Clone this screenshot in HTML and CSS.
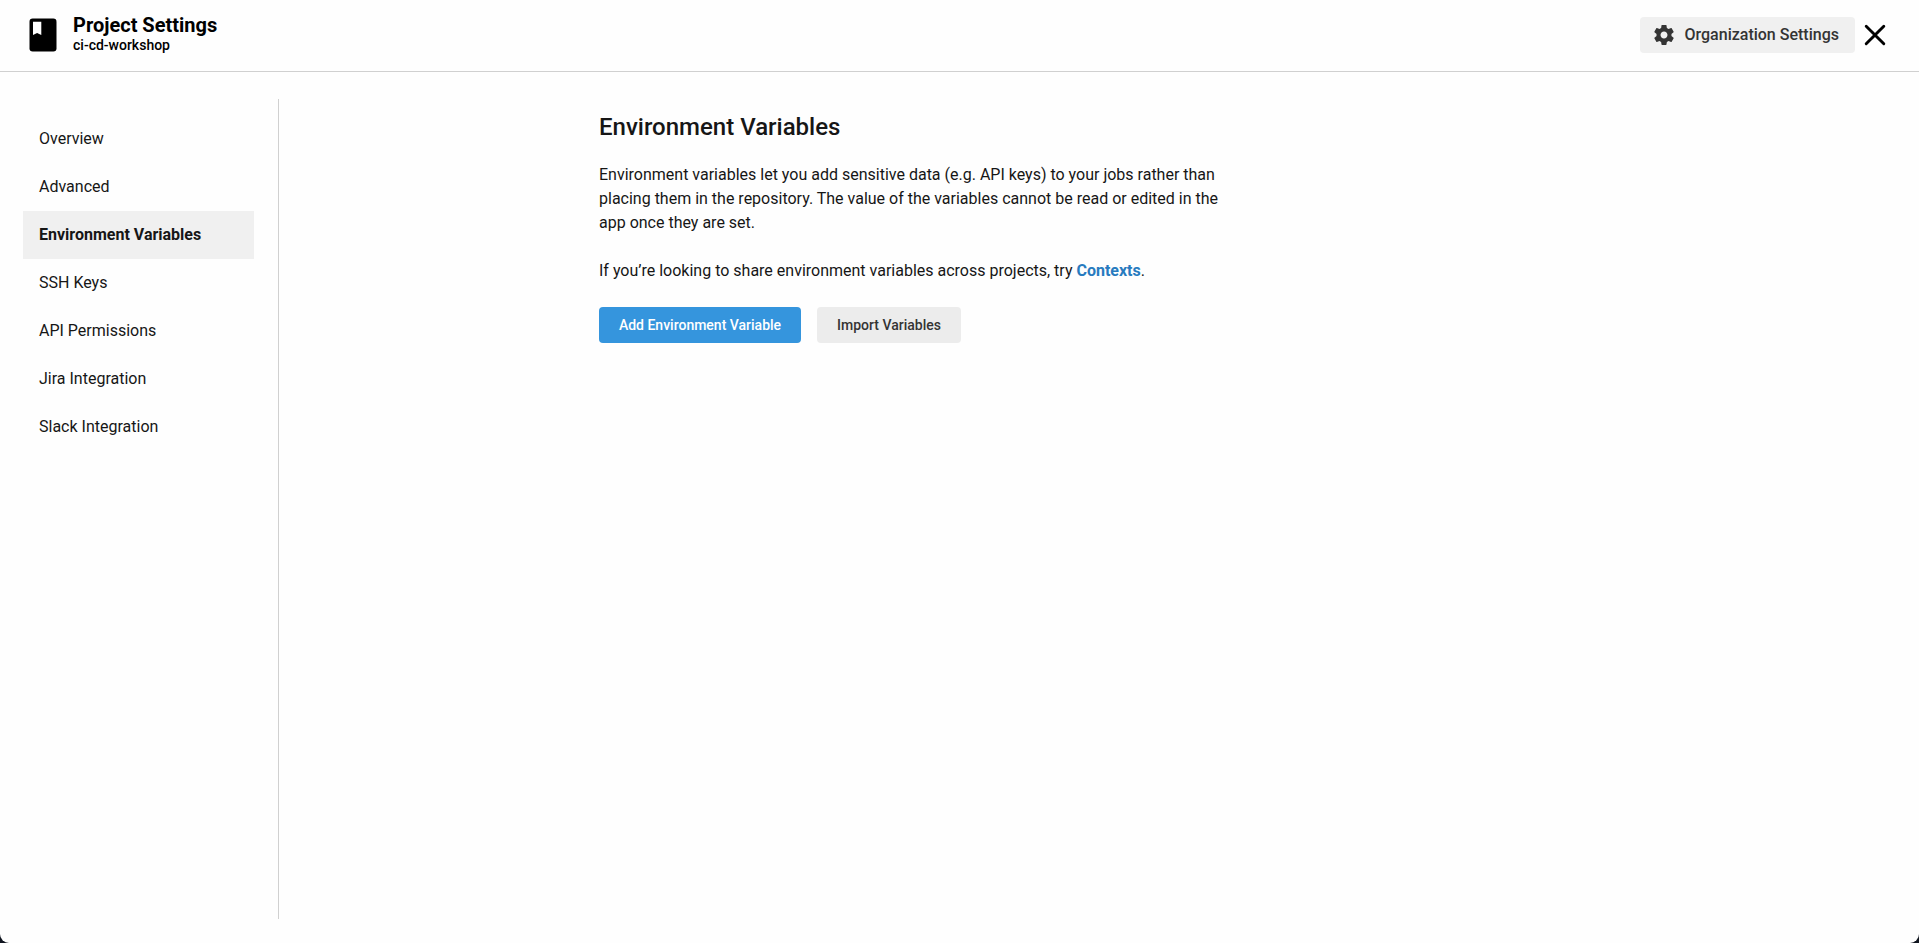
FILE: index.html
```html
<!DOCTYPE html>
<html lang="en">
<head>
<meta charset="utf-8">
<title>Project Settings</title>
<link rel="stylesheet" href="styles.css">
</head>
<body>
<div class="window">
  <header class="header">
    <svg class="project-icon" width="28" height="34" viewBox="0 0 28 34"><rect x=".5" y=".5" width="27" height="33" rx="3.2" fill="#000"/><path d="M4 3.7h8.3v13.4L8.1 15 4 17.1z" fill="#fff"/></svg>
    <div class="titles">
      <h1 class="title">Project Settings</h1>
      <div class="project-name">ci-cd-workshop</div>
    </div>
    <a class="org-button">
      <svg class="gear" width="24" height="24" viewBox="0 0 24 24"><path fill="#343434" d="M19.43 12.98c.04-.32.07-.64.07-.98s-.03-.66-.07-.98l2.11-1.65c.19-.15.24-.42.12-.64l-2-3.46c-.12-.22-.39-.3-.61-.22l-2.49 1c-.52-.4-1.08-.73-1.69-.98l-.38-2.65C14.46 2.18 14.25 2 14 2h-4c-.25 0-.46.18-.49.42l-.38 2.65c-.61.25-1.17.59-1.69.98l-2.49-1c-.23-.09-.49 0-.61.22l-2 3.46c-.13.22-.07.49.12.64l2.11 1.65c-.04.32-.07.65-.07.98s.03.66.07.98l-2.11 1.65c-.19.15-.24.42-.12.64l2 3.46c.12.22.39.3.61.22l2.49-1c.52.4 1.08.73 1.69.98l.38 2.65c.03.24.24.42.49.42h4c.25 0 .46-.18.49-.42l.38-2.65c.61-.25 1.17-.59 1.69-.98l2.49 1c.23.09.49 0 .61-.22l2-3.46c.12-.22.07-.49-.12-.64l-2.11-1.65zM12 15.5c-1.93 0-3.5-1.57-3.5-3.5s1.57-3.5 3.5-3.5 3.5 1.57 3.5 3.5-1.57 3.5-3.5 3.5z"/></svg>
      <span class="org-label">Organization Settings</span>
    </a>
    <svg class="close" width="22" height="22" viewBox="0 0 22 22"><path d="M2.2 2.2l17.6 17.6M19.8 2.2L2.2 19.8" stroke="#000" stroke-width="2.9" stroke-linecap="round"/></svg>
  </header>
  <div class="body">
    <nav class="sidebar">
      <a class="nav-item">Overview</a>
      <a class="nav-item">Advanced</a>
      <a class="nav-item active">Environment Variables</a>
      <a class="nav-item">SSH Keys</a>
      <a class="nav-item">API Permissions</a>
      <a class="nav-item">Jira Integration</a>
      <a class="nav-item">Slack Integration</a>
    </nav>
    <main class="content">
      <h2 class="heading">Environment Variables</h2>
      <p class="text">Environment variables let you add sensitive data (e.g. API keys) to your jobs rather than<br>placing them in the repository. The value of the variables cannot be read or edited in the<br>app once they are set.</p>
      <p class="text">If you’re looking to share environment variables across projects, try <a class="link">Contexts</a>.</p>
      <div class="actions">
        <button class="button primary">Add Environment Variable</button>
        <button class="button secondary">Import Variables</button>
      </div>
    </main>
  </div>
</div>
</body>
</html>
```
FILE: styles.css
```css
* { box-sizing: border-box; }
body { margin: 0; height: 943px; overflow: hidden; background: #10151f; font-family: Roboto, sans-serif; color: #161616; }
.window { display: flex; flex-direction: column; height: 943px; background: #fefefe; border-radius: 0 0 9px 9px; }
.header { display: flex; align-items: flex-start; height: 72px; flex: none; border-bottom: 1px solid #d0d0d0; padding: 17px 33px 0 29px; color: #000; }
.project-icon { margin-top: 1px; margin-right: 16px; flex: none; }
.titles { margin-top: -4px; }
.title { margin: 0; font-size: 20px; line-height: 24px; font-weight: 700; }
.project-name { font-size: 14px; line-height: 16px; font-weight: 500; }
.org-button { display: flex; align-items: center; width: 215px; height: 36px; margin-left: auto; margin-right: 9px; padding-left: 12px; background: #f0f0f0; border-radius: 4px; color: #343434; }
.gear { margin-right: 8.5px; flex: none; }
.org-label { font-size: 16px; line-height: 20px; font-weight: 500; white-space: nowrap; }
.close { margin-top: 7px; flex: none; }
.body { display: flex; flex: 1; padding: 27px 0 24px; }
.sidebar { width: 279px; flex: none; border-right: 1px solid #d0d0d0; padding: 16px 24px 0 23px; }
.nav-item { display: flex; align-items: center; height: 48px; padding-left: 16px; font-size: 16px; line-height: 20px; }
.active { background: #f0f0f0; font-weight: 700; }
.content { margin-left: 320px; padding-top: 12px; }
.heading { margin: 0 0 20px; font-size: 24px; line-height: 32px; font-weight: 500; }
.text { margin: 0 0 24px; font-size: 16px; line-height: 24px; white-space: nowrap; }
.link { color: #277bbf; font-weight: 700; }
.actions { display: flex; gap: 16px; }
.button { height: 36px; padding: 0; border: 0; border-radius: 4px; font: 500 14px/20px Roboto, sans-serif; }
.primary { width: 202px; background: #3595dd; color: #fff; }
.secondary { width: 144px; background: #ececec; color: #343434; }
```
